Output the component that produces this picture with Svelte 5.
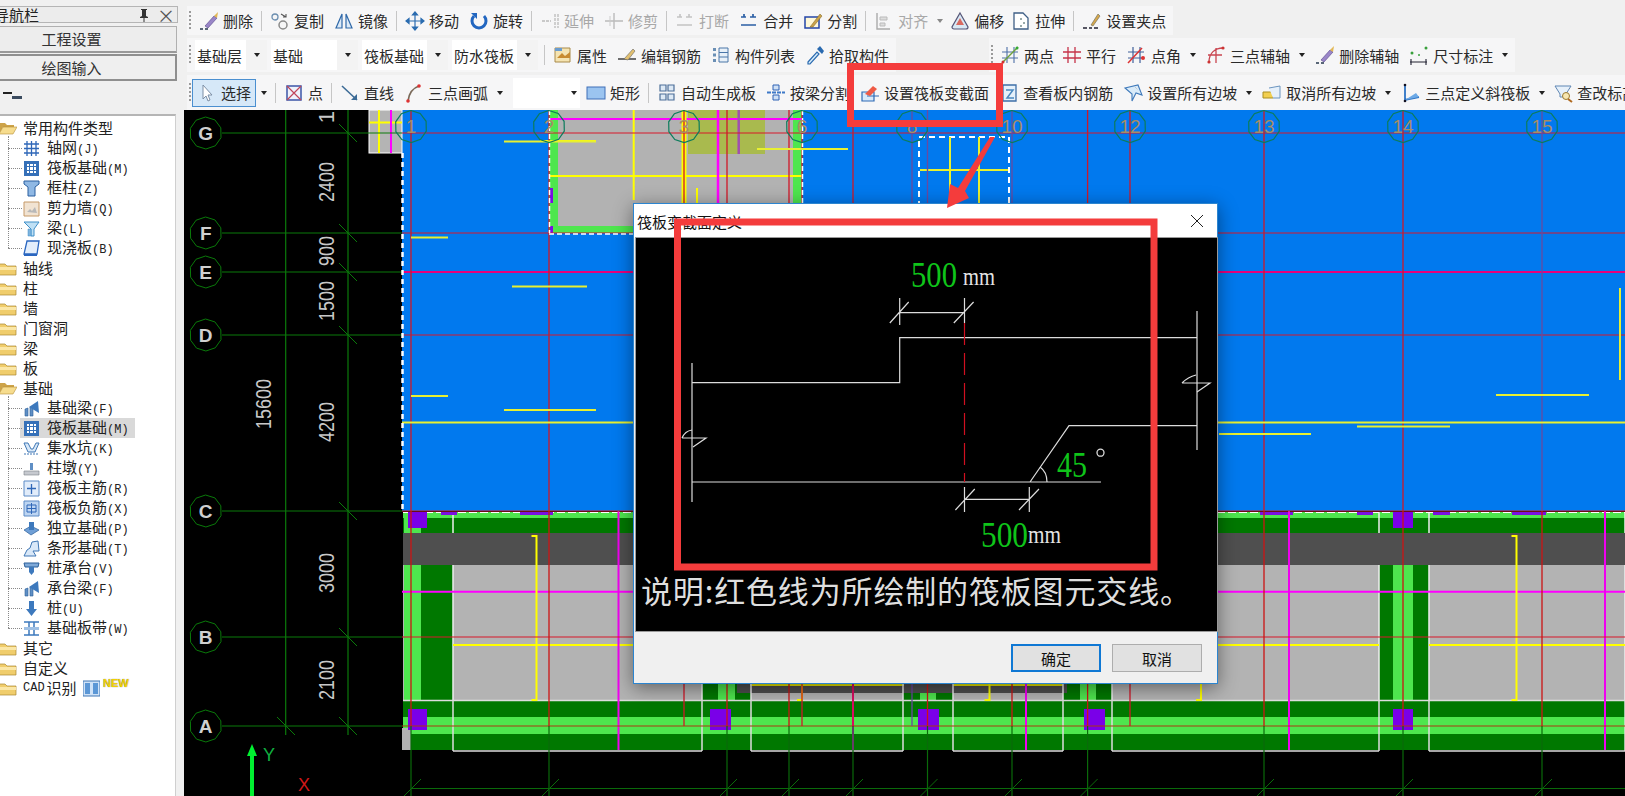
<script>
	// toolbar glyphs, 20x20
	const ic = {
		del: '<path d="M6 15 15 5l3 2-9 10z" fill="#9a86c8" stroke="#54458a" stroke-width=".6"/><path d="M15 5l3 2 1-6z" fill="#e2b755"/><path d="M1 18h3M6 18h3" stroke="#26384f" stroke-width="1.4"/>',
		copy: '<circle cx="5" cy="6" r="3" fill="none" stroke="#6d8fb0" stroke-width="1.3"/><circle cx="13" cy="14" r="4" fill="none" stroke="#8a8a8a" stroke-width="1.5"/><path d="M11 3l5 3M16 3v3h-3" fill="none" stroke="#555" stroke-width="1.1"/>',
		mirror: '<path d="M8 3 2 17h6zM12 3l6 14h-6z" fill="#dceaf8" stroke="#2f68a8" stroke-width="1.2"/>',
		move: '<path d="M10 1v18M1 10h18M10 1 7.5 4h5zM10 19l-2.500-3h5zM1 10l3-2.500v5zM19 10l-3-2.500v5z" fill="#2b6cb0" stroke="#2b6cb0" stroke-width="1.2"/>',
		rotate: '<path d="M5 5a7 7 0 1 0 10 0" fill="none" stroke="#2266c0" stroke-width="3"/><path d="M2 2h6v6z" fill="#2266c0"/>',
		extend: '<path d="M2 10h9M15 3v14M18 3v14" stroke="#bbb" stroke-width="1.3" stroke-dasharray="3 1"/>',
		trim: '<path d="M1 10h18M10 2v16" stroke="#bbb" stroke-width="1.4"/><path d="M6 5v10" stroke="#ccc"/>',
		brk: '<path d="M2 6h5M11 6h6M2 14h15M5 3v3M14 3v3" stroke="#c4c4c4" stroke-width="1.6"/>',
		merge: '<path d="M2 6h5M11 6h6M2 14h15M5 3v3M14 3v3" stroke="#2b5fa5" stroke-width="1.7"/>',
		split: '<path d="M2 6h14v11H2z" fill="#fff8d8" stroke="#2445a8" stroke-width="1.5"/><path d="M7 16 17 3l2 2-9 11z" fill="#c9a24a" stroke="#7a6020" stroke-width=".5"/>',
		align: '<path d="M3 2v16h13" fill="none" stroke="#aaa" stroke-width="1.4"/><path d="M6 6h7v3H6zM6 12h5v3H6z" fill="#ddd" stroke="#bbb"/>',
		offset: '<path d="M10 2 18 16a2 2 0 0 1-2 2H4a2 2 0 0 1-2-2z" fill="#d9e8f4" stroke="#557" stroke-width="1.2"/><path d="M10 7l4 7H6z" fill="#d96a60"/>',
		stretch: '<path d="M3 2h9l5 5v11H3z" fill="#fff" stroke="#3f5f86" stroke-width="1.3"/><path d="M9 7h2v2H9zM12 11h2v2h-2zM9 14h2v2H9z" fill="#9aa"/>',
		grip: '<path d="M9 14 16 3l2 2-7 10z" fill="#d6a84e" stroke="#665" stroke-width=".6"/><path d="M1 17h4M7 17h3M12 17h4" stroke="#223" stroke-width="1.5"/>',
		prop: '<path d="M2 3h15v14H2z" fill="#f5e4b2" stroke="#a88a4a"/><path d="M4 13l5-5 3 3 5-4v6H4z" fill="#c88b30"/><path d="M2 3h7v3H2z" fill="#6a9ccf"/>',
		rebar: '<path d="M1 14h18" stroke="#333" stroke-width="1.4"/><path d="M7 14 16 4l2 2-7 9z" fill="#e2c070" stroke="#666" stroke-width=".6"/>',
		list: '<path d="M2 3h3v3H2zM2 8.500h3v3H2zM2 14h3v3H2z" fill="#6a8fb5"/><path d="M8 3h9v14H8z" fill="#e8f0f8" stroke="#4a76a8"/><path d="M8 7.500h9M8 12h9" stroke="#4a76a8"/>',
		pick: '<path d="M3 17 12 7l2 2-9 10H3z" fill="#d8ecf9" stroke="#2a6ab0" stroke-width="1.2"/><path d="M12 4l5 5 2-3-4-5z" fill="#2a6ab0"/>',
		two: '<path d="M7 2v16M14 2v16M2 7h16M2 13h16" stroke="#4d6fa8" stroke-width="1.1"/><path d="M2 18 18 2" stroke="#6ea03c" stroke-width="1.4"/><circle cx="3" cy="17" r="1.500" fill="#c33"/><circle cx="17" cy="3" r="1.500" fill="#3a3"/>',
		para: '<path d="M6 2v16M13 2v16M1 7h18M1 13h18" stroke="#c6334a" stroke-width="1.3"/>',
		ang: '<path d="M6 2v16M13 2v16M1 7h16M1 13h16" stroke="#3f5f9a" stroke-width="1.2"/><path d="M1 18 15 3" stroke="#d33" stroke-width="1.500"/><circle cx="16" cy="13" r="2" fill="#d33"/>',
		arc3: '<path d="M3 17C3 8 9 3 17 3M10 3v15M2 10h14" fill="none" stroke="#c94550" stroke-width="1.3"/><circle cx="3" cy="17" r="1.600" fill="#c33"/><circle cx="17" cy="3" r="1.600" fill="#c33"/>',
		dim: '<path d="M1 17h17M2 14v6M17 14v6" stroke="#223" stroke-width="1.100"/><circle cx="3" cy="8" r="1.500" fill="#39a03c"/><circle cx="10" cy="10" r="1" fill="#39a03c"/><circle cx="17" cy="3" r="1.500" fill="#39a03c"/>',
		cursor: '<path d="M6 2v14l3-3 2 5 2-1-2-5h4z" fill="#fff" stroke="#7c8fa6"/>',
		point: '<path d="M3 3h14v14H3z" fill="#eef2fb" stroke="#3d55a8" stroke-width="1.500"/><path d="M3 3l14 14M17 3 3 17" stroke="#c0455a" stroke-width="1.200"/>',
		line: '<path d="M2 3 17 17" stroke="#3c6b96" stroke-width="1.600"/><path d="M17 17v-6l-6 6z" fill="#3c6b96"/>',
		arc: '<path d="M4 18C5 10 9 5 15 3" fill="none" stroke="#7a6a5a" stroke-width="1.800"/><circle cx="15" cy="3" r="1.800" fill="#d33"/><circle cx="4" cy="18" r="1.800" fill="#d33"/>',
		rect: '<rect x="1" y="4" width="18" height="12" fill="#9bc4f0" stroke="#3f6fb8"/>',
		auto: '<path d="M3 2h6v6H3zM11 2h6v6h-6zM3 11h6v6H3zM11 11h6v6h-6z" fill="#dde9f5" stroke="#4d6f99" stroke-width="1.200"/>',
		beam: '<path d="M7 2h6v5H7zM7 12h6v5H7z" fill="#cfe0f5" stroke="#2f62b5"/><path d="M1 9.500h18" stroke="#3d78c8" stroke-width="1.800" stroke-dasharray="4 1"/>',
		section: '<path d="M2 9h12v9H2z" fill="#d7e9fa" stroke="#2f6bb5" stroke-width="1.200"/><path d="M7 13h12" stroke="#2f6bb5"/><path d="M5 11 13 3l4 3-7 7z" fill="#ef5a45"/>',
		view: '<path d="M4 2h13v16H4z" fill="#e5f0fa" stroke="#3e6fa8" stroke-width="1.300"/><path d="M7 7h7l-6 8h7" fill="none" stroke="#4a88c0" stroke-width="1.500"/>',
		slope: '<path d="M2 5 15 2l4 10-6-2-4 8V11z" fill="#d9ebf9" stroke="#3f79ba" stroke-width="1.100"/><path d="M12 4l3 3" stroke="#bbb" stroke-dasharray="1 1"/>',
		noslope: '<path d="M1 9h10v6H1z" fill="#f2cf50" stroke="#a98e20"/><path d="M7 5 18 3v12h-7" fill="#e6f0fa" stroke="#6b94bf"/>',
		tri: '<path d="M4 2v15l14-3" fill="none" stroke="#2f74c5" stroke-width="1.800"/><path d="M4 17 15 10l3 4z" fill="#6ca9e6"/><circle cx="4" cy="2" r="1.300" fill="#112"/><circle cx="4" cy="18" r="1.300" fill="#112"/>',
		check: '<path d="M2 3h16l-5 8v3H7v-3z" fill="#e6f0fa" stroke="#5f86b3"/><circle cx="13" cy="13" r="3.500" fill="#f7e6b0" stroke="#9a7a30"/><path d="M15 16l4 3" stroke="#b06a20" stroke-width="2"/>'
	};

	const row1 = [
		{ t: '删除', i: 'del' }, '|', { t: '复制', i: 'copy' }, { t: '镜像', i: 'mirror' }, '|',
		{ t: '移动', i: 'move' }, { t: '旋转', i: 'rotate' }, '|', { t: '延伸', i: 'extend', off: 1 },
		{ t: '修剪', i: 'trim', off: 1 }, '|', { t: '打断', i: 'brk', off: 1 }, { t: '合并', i: 'merge' },
		{ t: '分割', i: 'split' }, '|', { t: '对齐', i: 'align', off: 1, caret: 1 }, { t: '偏移', i: 'offset', mg: -3 },
		{ t: '拉伸', i: 'stretch', mg: -3 }, '|', { t: '设置夹点', i: 'grip' }
	];
	const combos = [
		{ t: '基础层', w: 72 }, { t: '基础', w: 87 }, { t: '筏板基础', w: 86 }, { t: '防水筏板', w: 86 }
	];
	const row2 = [
		'|', { t: '属性', i: 'prop' }, { t: '编辑钢筋', i: 'rebar' }, { t: '构件列表', i: 'list' }, { t: '拾取构件', i: 'pick' }
	];
	const row2b = [
		{ t: '两点', i: 'two', mg: -1 }, { t: '平行', i: 'para', mg: -2 }, { t: '点角', i: 'ang', caret: 1, mg: 1 },
		{ t: '三点辅轴', i: 'arc3', caret: 1 }, { t: '删除辅轴', i: 'del' }, { t: '尺寸标注', i: 'dim', caret: 1 }
	];
	const row3 = [
		'|', { t: '点', i: 'point' }, '|', { t: '直线', i: 'line' }, { t: '三点画弧', i: 'arc', caret: 1 },
		{ blank: 1 }, { t: '矩形', i: 'rect' }, '|', { t: '自动生成板', i: 'auto' }, { t: '按梁分割', i: 'beam' },
		{ t: '设置筏板变截面', i: 'section' }, { t: '查看板内钢筋', i: 'view' }, { t: '设置所有边坡', i: 'slope', caret: 1 },
		{ t: '取消所有边坡', i: 'noslope', caret: 1 }, { t: '三点定义斜筏板', i: 'tri', caret: 1 }, { t: '查改标高', i: 'check', mg: -2 }
	];

	// tree glyphs, 17x17
	const tr = {
		grid: '<path d="M4 1v15M8.500 1v15M13 1v15M1 4h15M1 8.500h15M1 13h15" stroke="#2f67b8" stroke-width="1.300"/>',
		raft: '<path d="M1 1h15v15H1z" fill="#3570b8"/><path d="M4 4h9v9H4z" fill="#fff"/><path d="M6.500 4v9M10.500 4v9M4 6.500h9M4 10.500h9" stroke="#3570b8"/>',
		col: '<path d="M1 1h15v3l-4 3v9H5V7L1 4z" fill="#8fb8e4" stroke="#2a5f9f"/>',
		wall: '<path d="M1 2h15v14H1z" fill="#f1e3d2" stroke="#c69a68"/><path d="M4 12l3-3 2 2 3-4 2 6z" fill="#b8b8b8"/>',
		beam: '<path d="M1 2h15l-5 7v7H8V9z" fill="#bfe0f5" stroke="#3f8fc8"/><path d="M5 9h3v7H5z" fill="#7fb4dd" stroke="#3f8fc8" stroke-width=".5"/>',
		slab: '<path d="M4 1h12l-2 13H1z" fill="#e3eefb" stroke="#2a66c0" stroke-width="1.300"/><path d="M1 14h13v2H1z" fill="#2a66c0"/>',
		fb: '<path d="M2 16V9l3-1v8zM7 16V7l3 1v8z" fill="#5f8fc5" stroke="#2b5f99" stroke-width=".6"/><path d="M6 7 15 1l1 12-5-3z" fill="#3d79bd"/>',
		pit: '<path d="M1 3h4l3 6h2l3-6h3l-4 9H5z" fill="#d8e8f8" stroke="#3f77b5"/><path d="M1 14h15" stroke="#3f77b5" stroke-dasharray="2 1"/>',
		pier: '<path d="M7 3h3v7H7z" fill="#5f8fc5"/><path d="M1 11h15v4H1z" fill="#c6c9cf" stroke="#7a7f88" stroke-width=".6"/>',
		main: '<path d="M1 1h15v15H1z" fill="#e1ecfa" stroke="#5d8bc6"/><path d="M8.500 4v10M4 8.500h9" stroke="#2f67b8" stroke-width="1.300"/>',
		neg: '<path d="M1 1h15v15H1z" fill="#bdd5f2" stroke="#5d8bc6"/><path d="M4 5h9v7H4zM8.500 3v11M4 8.500h9" fill="none" stroke="#2f67b8"/>',
		ind: '<path d="M1 10l7-4 8 4-8 5z" fill="#6f9fd6" stroke="#2b5f99" stroke-width=".7"/><path d="M6 2h5v8H6z" fill="#3d79bd"/>',
		str: '<path d="M1 16l3-6 3-2 2-6 6-1 1 10H10l3 5z" fill="#d9e8f8" stroke="#3f77b5"/>',
		cap: '<path d="M1 3h15l-1 4H2z" fill="#7fa9d8" stroke="#2b5f99"/><path d="M6 7h5v5l-2.500 3L6 12z" fill="#3d79bd"/>',
		pile: '<path d="M6 1h5v8h3l-5.500 7L3 9h3z" fill="#3d79bd"/>',
		belt: '<path d="M1 2h15M1 15h15M6 2v13M11 2v13" stroke="#3d79bd" stroke-width="1.500"/><path d="M1 8.500h15" stroke="#9fc0e4" stroke-width="3"/>'
	};

	const tree = [
		{ t: '常用构件类型', open: 1, kids: [
			['grid', '轴网', 'J'], ['raft', '筏板基础', 'M'], ['col', '框柱', 'Z'],
			['wall', '剪力墙', 'Q'], ['beam', '梁', 'L'], ['slab', '现浇板', 'B']
		] },
		{ t: '轴线' }, { t: '柱' }, { t: '墙' }, { t: '门窗洞' }, { t: '梁' }, { t: '板' },
		{ t: '基础', open: 1, kids: [
			['fb', '基础梁', 'F'], ['raft', '筏板基础', 'M', 1], ['pit', '集水坑', 'K'], ['pier', '柱墩', 'Y'],
			['main', '筏板主筋', 'R'], ['neg', '筏板负筋', 'X'], ['ind', '独立基础', 'P'], ['str', '条形基础', 'T'],
			['cap', '桩承台', 'V'], ['fb', '承台梁', 'F'], ['pile', '桩', 'U'], ['belt', '基础板带', 'W']
		] },
		{ t: '其它' }, { t: '自定义' }, { t: 'CAD', cad: 1 }
	];

	// plan drawing, all in page coordinates
	const fullAxes = [411, 549, 727, 789, 853, 927.5, 1012, 1087.6, 1264, 1403, 1542];
	const shortAxes = [684, 802, 912, 1130];
	const purple = [912, 927.5, 1012, 1542];
	const rows = [
		['G', 133], ['F', 233], ['E', 272], ['D', 335], ['C', 511], ['B', 637], ['A', 726]
	];
	const heads = [
		['1', 411], ['2', 549], ['3', 684], ['6', 802], ['8', 912], ['10', 1012],
		['12', 1130], ['13', 1264], ['14', 1403], ['15', 1542]
	];
	const dims = [
		['2400', 326, 182, 40], ['900', 326, 251, 30], ['1500', 326, 301, 40], ['4200', 326, 422, 40],
		['3000', 326, 573, 40], ['2100', 326, 680, 40], ['15600', 263, 404, 50]
	];
	const blueYellow = [
		[504, 596, 141.5], [411, 448, 237.500], [512, 587, 286.500], [411, 448, 396], [504, 596, 410],
		[757, 848, 149], [402, 1625, 422.500], [1357, 1450, 426.500], [1219, 1311, 434], [1496, 1589, 395]
	];
	const columns = [
		{ d: [702, 751], b: [718, 735], s: [710, 731] },
		{ d: [903, 953], b: [920, 936], s: [918, 939] },
		{ d: [1063, 1112], b: [1080, 1096], s: [1084, 1105] },
		{ d: [1379, 1429], b: [1393, 1413], s: [1393, 1413] }
	];
	const panels = [[453, 702], [751, 903], [953, 1063], [1112, 1379], [1429, 1625]];
	const brackets = [536.5, 802, 989.500, 1201, 1516.500];
	const magentaV = [618.500, 1289, 1605, 853, 1026];
	const marks = [[441, 457], [520, 553], [1260, 1293], [1357, 1373], [1433, 1450], [1512, 1546]];

	function ring(cx, cy, r) {
		let out = [];
		for (let k = 0; k < 10; k++) {
			const a = (k * Math.PI) / 5 + 0.3;
			out.push((cx + r * Math.cos(a)).toFixed(1) + ',' + (cy + r * Math.sin(a)).toFixed(1));
		}
		return out.join(' ');
	}
</script>

{#snippet tool(it)}
	{#if it === '|'}
		<span class="sep"></span>
	{:else if it.blank}
		<span class="blank"><span class="caret"></span></span>
	{:else}
		<span class="item" class:off={it.off} style="margin-left:{it.mg || 0}px">
			<svg class="ticon" viewBox="0 0 20 20" width="20" height="20">{@html ic[it.i]}</svg>
			<span>{it.t}</span>
			{#if it.caret}<span class="caret"></span>{/if}
		</span>
	{/if}
{/snippet}

<div class="page">
	<aside>
		<div class="navhead">
			<span class="navtitle">导航栏</span>
			<span class="pin">
				<svg viewBox="0 0 12 14" width="12" height="14"><path d="M3 1h6v1H8v6l2 1v1H6.500v4h-1v-4H2V9l2-1V2H3z" fill="#333" /></svg>
			</span>
			<span class="navx">×</span>
		</div>
		<button class="navbtn">工程设置</button>
		<button class="navbtn dark">绘图输入</button>
		<div class="minibar"><i></i><b></b></div>
		<div class="tree">
			{#each tree as node}
				<div class="folder">
					<svg viewBox="0 0 18 16" width="18" height="16">
						{#if node.open}
							<path d="M0 3h6l2 2h7v2H4L0 14z" fill="#cda349" />
							<path d="M4 7h14l-4 7H0z" fill="#f6dc8e" stroke="#b58d35" stroke-width=".6" />
						{:else}
							<path d="M0 4h6l2 2h9v9H0z" fill="#f0cd6c" stroke="#a98630" stroke-width=".7" />
							<path d="M0 7h17v3H0z" fill="#fbe7a6" />
						{/if}
					</svg>
					{#if node.cad}
						<span class="mono wide">CAD</span><span>识别</span>
						<svg class="book" viewBox="0 0 17 17" width="17" height="17">
							<path d="M0 1h17v15H0z" fill="#cfe2f7" stroke="#3f77b5" />
							<path d="M2 3h5v11H2zM10 3h5v11h-5z" fill="#5b97d6" />
						</svg>
						<span class="new">NEW</span>
					{:else}
						<span>{node.t}</span>
					{/if}
				</div>
				{#if node.kids}
					<div class="kids">
						{#each node.kids as k}
							<div class="kid" class:sel={k[3]}>
								<svg viewBox="0 0 17 17" width="17" height="17">{@html tr[k[0]]}</svg>
								<span class="kname">{k[1]}<span class="mono">({k[2]})</span></span>
							</div>
						{/each}
					</div>
				{/if}
			{/each}
		</div>
	</aside>

	<div class="main">
		<div class="toolbars">
			<div class="bar r1">
				<span class="dots"></span>
				{#each row1 as it}{@render tool(it)}{/each}
			</div>
			<div class="line2">
				<div class="bar r2">
					<span class="dots"></span>
					<span class="combos">
						{#each combos as c}
							<span class="combo" style="width:{c.w}px">
								<span>{c.t}</span>
								<span class="drop"><span class="caret"></span></span>
							</span>
						{/each}
					</span>
					{#each row2 as it}{@render tool(it)}{/each}
				</div>
				<div class="bar r2">
					<span class="dots"></span>
					{#each row2b as it}{@render tool(it)}{/each}
				</div>
			</div>
			<div class="bar r3">
				<span class="dots"></span>
				<span class="picked">
					<svg class="ticon" viewBox="0 0 20 20" width="20" height="20">{@html ic.cursor}</svg>
					<span>选择</span>
				</span>
				<span class="caret pc"></span>
				{#each row3 as it}{@render tool(it)}{/each}
			</div>
		</div>

		<div class="canvas">
			<svg class="plan" viewBox="184 110 1441 686" width="1441" height="686">
				<rect x="184" y="110" width="1441" height="686" fill="#000" />
				<rect x="402" y="110" width="1223" height="401" fill="#0179ee" />

				<!-- upper slab pieces -->
				<rect x="369" y="110" width="33" height="43" fill="#b4b4b4" stroke="#fff" />
				<path d="M379 110v43M369 122.500h33" stroke="#ff0" stroke-width="2" />
				<path d="M391 110v43" stroke="#f0f" stroke-width="2" />
				<rect x="549" y="110" width="253" height="123" fill="#4ee64e" />
				<rect x="558" y="110" width="235" height="116" fill="#b2b2b2" />
				<rect x="688" y="110" width="77" height="44" fill="#a9ba4e" />
				<path d="M549 119h253" stroke="#f0f" stroke-width="2" />
				<path d="M549 176h253M633.700 110v90M540 141h56" stroke="#ff0" stroke-width="2" />
				<path d="M684 110v93" stroke="#ff0" stroke-width="5" />
				<path d="M697 188v15" stroke="#ff0" stroke-width="2" />
				<path d="M718 110v93" stroke="#f0f" stroke-width="2.500" />
				<path d="M738.700 110v44" stroke="#a050b0" stroke-width="2.500" />
				<path d="M550 188h3v15h-3zM550 226h3v7h-3z" fill="#7a10e0" />
				<rect x="919" y="137" width="90" height="80" fill="none" stroke="#fff" stroke-width="2" stroke-dasharray="6 4" />
				<path d="M920 170h88M950 137v63M979 137v66" stroke="#e8f030" stroke-width="2" />

				<!-- lower foundation band -->
				<rect x="403" y="512" width="1222" height="21" fill="#007800" />
				<rect x="403" y="512" width="1222" height="6" fill="#4ee64e" />
				<rect x="403" y="565" width="1222" height="135" fill="#b3b3b3" />
				<rect x="403" y="533" width="1222" height="32" fill="#4f4f4f" />
				<rect x="403" y="700" width="1222" height="50" fill="#007800" />
				<rect x="403" y="717" width="1222" height="17" fill="#4ee64e" />
				<rect x="402" y="728" width="9" height="22" fill="#b3b3b3" />
				<rect x="404" y="512" width="17" height="21" fill="#4ee64e" />
				<rect x="421" y="565" width="32" height="135" fill="#007800" />
				<rect x="404" y="565" width="17" height="135" fill="#4ee64e" />
				{#each columns as c}
					<rect x={c.d[0]} y="565" width={c.d[1] - c.d[0]} height="135" fill="#007800" />
					<rect x={c.b[0]} y="565" width={c.b[1] - c.b[0]} height="135" fill="#4ee64e" />
				{/each}
				<rect x="737" y="565" width="330" height="128" fill="#4f4f4f" />
				<path d="M750 685h154M953 685h110" stroke="#e6e600" stroke-width="2" />
				{#each panels as p}
					<path d="M{p[0]} 751H{p[1]}M{p[0]} 700V751M{p[1]} 700V751" stroke="#ddd" fill="none" stroke-width="1.500" />
					<path d="M{p[0]} 565V700M{p[1]} 565V700M{p[0]} 512V533M{p[1]} 512V533" stroke="#eee" stroke-width="1.500" />
				{/each}
				<path d="M403 700.500h1222" stroke="#ddd" stroke-width="1.500" />
				<path d="M403 512.500h1222" stroke="#fff" stroke-dasharray="8 3" />
				{#each marks as m}
					<rect x={m[0]} y="512" width={m[1] - m[0]} height="3" fill="#7a10e0" />
				{/each}
				<path d="M402 591.700h1223" stroke="#f0f" stroke-width="2" />
				<path d="M453 645h926M1429 645h196" stroke="#ff0" stroke-width="2" />
				{#each magentaV as x}
					<path d="M{x} 511V750" stroke="#f000f0" stroke-width="2" />
				{/each}
				{#each brackets as x}
					<path d="M{x - 5} 536h5V700h-5" fill="none" stroke="#ff0" stroke-width="2" />
				{/each}
				<rect x="408" y="512" width="19" height="16" fill="#7a00e8" />
				<rect x="408" y="709" width="19" height="21" fill="#7a00e8" />
				{#each columns as c}
					<rect x={c.s[0]} y="512" width={c.s[1] - c.s[0]} height="16" fill="#7a00e8" />
					<rect x={c.s[0]} y="709" width={c.s[1] - c.s[0]} height="21" fill="#7a00e8" />
				{/each}

				<!-- axis lines -->
				{#each rows as r}
					<path d="M222 {r[1]}H402" stroke="#0a7a0a" stroke-width="1.200" />
					<path
						d="M402 {r[1]}H1625"
						stroke={r[0] === 'E' ? '#e8007c' : r[0] === 'A' ? '#a83a10' : '#d8182a'}
						stroke-width={r[0] === 'E' ? 2 : 1.200}
					/>
					<polygon points={ring(205.700, r[1], 16)} fill="none" stroke="#0a7a0a" />
					<text class="rowlabel" x="205.700" y={r[1] + 7}>{r[0]}</text>
					<path d="M339 {r[1] - 9}l18 18" stroke="#0a7a0a" />
				{/each}
				<path d="M285.700 110V735M348 110V735" stroke="#0a7a0a" stroke-width="1.200" />
				<path d="M277 717l18 18" stroke="#0a7a0a" />
				<path d="M411 788.500H1625" stroke="#0a6a0a" />

				{#each fullAxes as x}
					<path d="M{x} 110V511" stroke={purple.includes(x) ? '#6a4aa0' : '#d01828'} stroke-width="1.300" />
					<path d="M{x} 511V726" stroke="#cc1414" stroke-width="1.300" />
					<path d="M{x} 726V796" stroke="#0a6a0a" stroke-width="1.200" />
					<path d="M{x - 8} 797l18-18" stroke="#0a6a0a" />
				{/each}
				{#each shortAxes as x}
					<path d="M{x} 110V726" stroke={purple.includes(x) ? '#6a4aa0' : '#d01828'} stroke-width="1.300" />
				{/each}
				<path d="M1620 288v92" stroke="#e8f030" stroke-width="2" />
				{#each blueYellow as y}
					<path d="M{y[0]} {y[2]}H{y[1]}" stroke="#e8f030" stroke-width="2" />
				{/each}

				<path d="M402.500 153V511" stroke="#fff" stroke-width="2.500" stroke-dasharray="5 4" />
				<path d="M549.500 110V233M549 234h254M802.500 110V233" stroke="#fff" stroke-width="1.500" stroke-dasharray="5 3" fill="none" />

				{#each heads as h}
					<polygon points={ring(h[1], 126.500, 16)} fill="none" stroke="#0c7c5c" stroke-width="1.200" />
					<text class="headlabel" x={h[1]} y="133">{h[0]}</text>
				{/each}

				<text class="dimtext" transform="translate(334 117) rotate(-90)" text-anchor="middle">1</text>
				{#each dims as d}
					<text
						class="dimtext"
						transform="translate({d[1] + 8} {d[2]}) rotate(-90)"
						text-anchor="middle"
						textLength={d[3]}
						lengthAdjust="spacingAndGlyphs">{d[0]}</text>
				{/each}

				<!-- ucs marker -->
				<path d="M252 796V754" stroke="#00f030" stroke-width="4" />
				<path d="M252 744l5 12h-10z" fill="#00f030" />
				<text class="ucs" x="263" y="761" fill="#10b040">Y</text>
				<text class="ucs" x="298" y="791" fill="#d01818">X</text>
			</svg>

			<div class="dialog">
				<div class="dlgtitle">
					<span>筏板变截面定义</span>
					<svg viewBox="0 0 12 12" width="12" height="12"><path d="M0 0l12 12M12 0 0 12" stroke="#222" stroke-width="1" /></svg>
				</div>
				<svg class="detail" viewBox="635 238 581 393" width="581" height="393">
					<rect x="635" y="238" width="581" height="393" fill="#000" />
					<g class="wire">
						<path d="M691 363V502M691 382.700H898.700V337.700H1196M1196 311V450M691 482H1100M1029 482 1068 425.700H1196" />
						<path d="M898.700 298V325M963.500 298V323M898.700 312.700H963.500M888.800 323l18.900-21M952.800 323l19.800-21" />
						<path d="M963.500 487V512M1028.300 487V512M963.500 499.300H1028.300M954.400 510l19.400-21M1018 510l20-21" />
						<path d="M681 438H705L692 447M691 430Q684 431 681 438M1181 383H1209L1196 392M1195 375Q1187 377 1181 383" />
						<path d="M1039 467Q1046 472 1046 482" />
					</g>
					<path d="M963.500 323V482" stroke="#d01020" stroke-width="1.200" stroke-dasharray="22 8" />
					<text class="big" x="910" y="287" textLength="46" lengthAdjust="spacingAndGlyphs">500</text>
					<text class="mm" x="962" y="285" textLength="32" lengthAdjust="spacingAndGlyphs">mm</text>
					<text class="big" x="980" y="547" textLength="47" lengthAdjust="spacingAndGlyphs">500</text>
					<text class="mm" x="1027" y="543" textLength="33" lengthAdjust="spacingAndGlyphs">mm</text>
					<text class="big" x="1056" y="477" textLength="30" lengthAdjust="spacingAndGlyphs">45</text>
					<circle cx="1099.500" cy="452.700" r="3.500" fill="none" stroke="#ddd" stroke-width="1.300" />
					<text class="note" x="640" y="603" textLength="550">说明:红色线为所绘制的筏板图元交线。</text>
				</svg>
				<div class="dlgfoot">
					<button class="dlgbtn ok">确定</button>
					<button class="dlgbtn">取消</button>
				</div>
			</div>
		</div>
	</div>

	<svg class="marks" viewBox="0 0 1625 796" width="1625" height="796">
		<path d="M850.500 66.500h149v57h-149zM677.500 222h476.500v345h-476.500z" fill="none" stroke="#f43c3c" stroke-width="7" />
		<path d="M995 137 965 191 969 198 947 208 950 184 958 188 990 137z" fill="#f43c3c" />
	</svg>
</div>

<style>
	:global(body) {
		margin: 0;
		background: #f0f0f0;
		font-family: "Noto Sans CJK SC", "Liberation Sans", sans-serif;
		color: #222;
	}
	.page {
		position: relative;
		display: flex;
		width: 1625px;
		height: 796px;
		overflow: hidden;
		background: #f0f0f0;
	}
	aside {
		flex: none;
		display: flex;
		flex-direction: column;
		width: 178px;
		margin-right: 6px;
		padding-top: 6px;
		box-sizing: border-box;
		font-size: 15px;
		line-height: 20px;
	}
	.navhead {
		display: flex;
		align-items: center;
		height: 17px;
		flex: none;
		background: #ececec;
		border: 1px solid #b5b5b5;
		border-left: none;
		box-sizing: border-box;
	}
	.navtitle {
		margin-left: -6px;
		flex: 1;
	}
	.pin {
		display: flex;
		margin-right: 7px;
	}
	.navx {
		margin-right: 2px;
		font-size: 18px;
		color: #555;
	}
	.navbtn {
		flex: none;
		width: 211px;
		height: 27px;
		margin: 3px 0 0 -34px;
		padding: 0;
		background: #ededed;
		border: 1px solid #b0b0b0;
		border-bottom: 2px solid #999;
		font: inherit;
		color: #333;
	}
	.navbtn.dark {
		margin-top: 1px;
		border: 2px solid #8f8f8f;
		background: #efefef;
	}
	.minibar {
		position: relative;
		flex: none;
		height: 33px;
	}
	.minibar i {
		position: absolute;
		left: 3px;
		top: 11px;
		width: 9px;
		height: 2px;
		background: #222;
	}
	.minibar b {
		position: absolute;
		left: 12px;
		top: 15px;
		width: 10px;
		height: 3px;
		background: #3b4b5f;
	}
	.tree {
		flex: 1;
		width: 176px;
		padding-top: 2px;
		box-sizing: border-box;
		background: #fff;
		border-top: 2px solid #b5b5b5;
		border-right: 1px solid #cfcfcf;
		overflow: hidden;
	}
	.folder {
		position: relative;
		display: flex;
		align-items: center;
		height: 20px;
		color: #222;
	}
	.folder > svg:first-child {
		flex: none;
		margin: 0 6px 0 -1px;
	}
	.book {
		margin-left: 6px;
	}
	.new {
		position: absolute;
		left: 103px;
		top: -1px;
		font: bold 11px "Liberation Sans", sans-serif;
		color: #f2d000;
		text-shadow: 0 0 1px #665;
	}
	.kids {
		position: relative;
	}
	.kids::before {
		content: "";
		position: absolute;
		left: 8px;
		top: -2px;
		bottom: 10px;
		border-left: 1px dotted #888;
	}
	.kid {
		position: relative;
		display: flex;
		align-items: center;
		gap: 7px;
		width: 112px;
		height: 20px;
		margin-left: 20px;
		padding-left: 3px;
		white-space: nowrap;
	}
	.kid::before {
		content: "";
		position: absolute;
		left: -12px;
		width: 14px;
		top: 10px;
		border-top: 1px dotted #888;
	}
	.kid.sel {
		background: #d9d9d9;
	}
	.kid svg {
		flex: none;
	}
	.mono {
		font-family: "Liberation Mono", monospace;
		font-size: 12px;
	}
	.wide {
		margin-right: 2px;
	}

	.main {
		flex: 1;
		min-width: 0;
		display: flex;
		flex-direction: column;
	}
	.toolbars {
		flex: none;
		height: 110px;
		padding: 6px 0 0 3px;
		box-sizing: border-box;
		font-size: 15px;
		color: #2a2a2a;
		white-space: nowrap;
	}
	.bar {
		display: flex;
		align-items: center;
		gap: 10px;
		width: fit-content;
		padding-right: 7px;
		background: #f6f6f7;
	}
	.r1 {
		height: 29px;
		margin-bottom: 3px;
	}
	.line2 {
		display: flex;
		gap: 93px;
		height: 34px;
		margin-bottom: 3px;
	}
	.r2 {
		height: 34px;
	}
	.r3 {
		height: 35px;
		width: 1438px;
		padding-right: 0;
		overflow: hidden;
	}
	.dots {
		flex: none;
		width: 2px;
		height: 20px;
		margin: 0 -2px 0 2px;
		background: repeating-linear-gradient(#9a9a9a 0 2px, transparent 2px 4px);
	}
	.item {
		display: flex;
		align-items: center;
		gap: 4px;
		flex: none;
	}
	.ticon {
		flex: none;
	}
	.off {
		color: #a8a8a8;
	}
	.sep {
		flex: none;
		width: 1px;
		height: 20px;
		margin: 0 -2px;
		background: #c6c6c6;
	}
	.caret {
		display: inline-block;
		flex: none;
		width: 0;
		height: 0;
		margin-left: 5px;
		border: 3.500px solid transparent;
		border-top: 4px solid #222;
		border-bottom: none;
	}
	.off .caret {
		border-top-color: #888;
	}
	.combos {
		display: flex;
		gap: 4px;
		margin: 0 -2px 0 -4px;
	}
	.combo {
		display: flex;
		align-items: center;
		justify-content: space-between;
		height: 30px;
		padding-left: 2px;
		box-sizing: border-box;
		background: #fff;
	}
	.drop {
		display: flex;
		align-items: center;
		justify-content: center;
		width: 21px;
		height: 100%;
		background: #f3f3f3;
	}
	.drop .caret {
		margin: 0;
	}
	.blank {
		display: flex;
		align-items: center;
		justify-content: flex-end;
		flex: none;
		width: 67px;
		height: 30px;
		margin-right: -4px;
		padding-right: 3px;
		box-sizing: border-box;
		background: #fff;
	}
	.picked {
		display: flex;
		align-items: center;
		gap: 4px;
		flex: none;
		height: 28px;
		margin-left: -7px;
		padding: 0 4px 0 4px;
		box-sizing: border-box;
		background: #d6e8f8;
		border: 1px solid #4a8fd0;
	}
	.pc {
		margin-left: -5px;
	}

	.canvas {
		position: relative;
		flex: 1;
		min-height: 0;
	}
	.plan {
		display: block;
	}
	.rowlabel {
		font: bold 19px "Liberation Sans", sans-serif;
		fill: #d0d0d0;
		text-anchor: middle;
	}
	.headlabel {
		font: 19px "Liberation Sans", sans-serif;
		fill: #a98c63;
		text-anchor: middle;
	}
	.dimtext {
		font: 22px "Liberation Sans", sans-serif;
		fill: #c8c8c8;
	}
	.ucs {
		font: 18px "Liberation Sans", sans-serif;
	}

	.dialog {
		position: absolute;
		left: 449px;
		top: 93px;
		display: flex;
		flex-direction: column;
		width: 585px;
		height: 481px;
		padding: 0 2px;
		box-sizing: border-box;
		background: #f0f0f0;
		border: 1px solid #2b85d0;
		box-shadow: 0 4px 18px rgba(0, 0, 0, 0.45);
	}
	.dlgtitle {
		display: flex;
		align-items: center;
		justify-content: space-between;
		flex: none;
		height: 34px;
		margin: 0 -2px;
		padding: 0 14px 0 3px;
		background: #fff;
		font-size: 15px;
		color: #111;
	}
	.detail {
		display: block;
		flex: none;
		outline: 1px solid #9a9a9a;
	}
	.wire {
		fill: none;
		stroke: #dcdcdc;
		stroke-width: 1.200;
	}
	.big {
		font: 36px "Liberation Serif", serif;
		fill: #0fc41a;
	}
	.mm {
		font: 26px "Liberation Serif", serif;
		fill: #e4e4e4;
	}
	.note {
		font: 31px "Noto Sans CJK SC", sans-serif;
		fill: #dedede;
	}
	.dlgfoot {
		flex: 1;
		display: flex;
		justify-content: flex-end;
		align-items: flex-start;
		gap: 11px;
		padding: 13px 13px 0 0;
	}
	.dlgbtn {
		width: 90px;
		height: 28px;
		padding: 0;
		box-sizing: border-box;
		background: #e1e1e1;
		border: 1px solid #adadad;
		font: 15px "Noto Sans CJK SC", sans-serif;
		color: #111;
	}
	.dlgbtn.ok {
		border: 2px solid #0f78d4;
	}

	.marks {
		position: absolute;
		left: 0;
		top: 0;
		pointer-events: none;
	}
</style>
